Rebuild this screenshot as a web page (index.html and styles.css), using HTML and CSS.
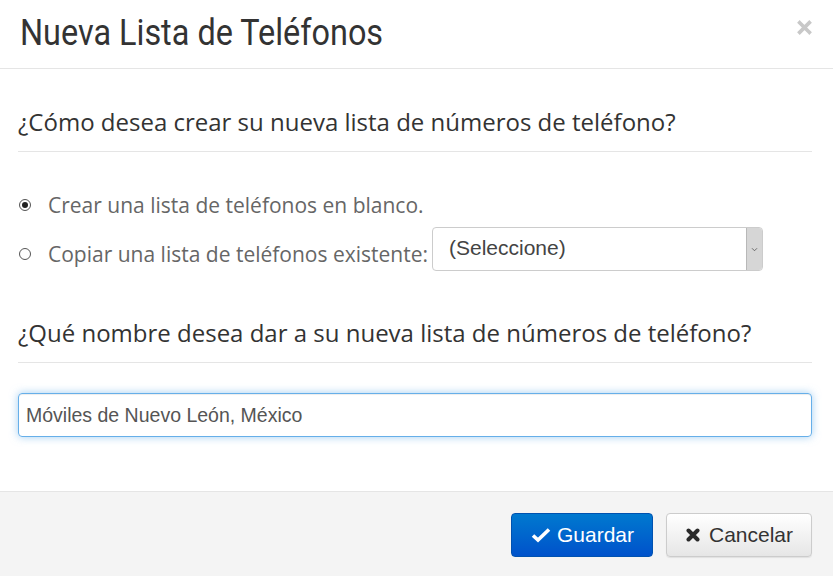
FILE: index.html
```html
<!DOCTYPE html>
<html>
  <head>
    <title>Nueva Lista de Teléfonos</title>
    <link rel="stylesheet" href="styles.css">
  </head>
  <body>
    <div class="modal">
      <header class="modal-header">
        <h1 class="modal-title">Nueva Lista de Teléfonos</h1>
        <button class="close-button" aria-label="Cerrar">
          <svg viewBox="0 0 14 14" width="15" height="15">
            <path d="M2.5 2.5 L11.5 11.5 M11.5 2.5 L2.5 11.5" stroke="#c8c8c8" stroke-width="3.4" stroke-linecap="square" />
          </svg>
        </button>
      </header>

      <div class="modal-body">
        <h2 class="section-title">¿Cómo desea crear su nueva lista de números de teléfono?</h2>

        <div class="options">
          <label class="radio-row">
            <span class="radio checked"></span>
            <span class="radio-label">Crear una lista de teléfonos en blanco.</span>
          </label>
          <label class="radio-row">
            <span class="radio"></span>
            <span class="radio-label">Copiar una lista de teléfonos existente:</span>
            <span class="select">
              <span class="select-text">(Seleccione)</span>
              <span class="select-arrow">
                <svg viewBox="0 0 8 6" width="7" height="5">
                  <path d="M1 1.5 L4 4.5 L7 1.5" fill="none" stroke="#555" stroke-width="1" />
                </svg>
              </span>
            </span>
          </label>
        </div>

        <h2 class="section-title">¿Qué nombre desea dar a su nueva lista de números de teléfono?</h2>

        <div class="text-input">Móviles de Nuevo León, México</div>
      </div>

      <footer class="modal-footer">
        <button class="btn btn-primary">
          <svg viewBox="0 0 20 16" width="20" height="16">
            <path d="M2 8.5 L7 13 L18 2.5" fill="none" stroke="#fff" stroke-width="3.6" />
          </svg>
          Guardar
        </button>
        <button class="btn btn-default">
          <svg viewBox="0 0 16 14" width="16" height="14">
            <path d="M3.5 2.5 L12.5 11.5 M12.5 2.5 L3.5 11.5" stroke="#2a2a2a" stroke-width="4" stroke-linecap="round" />
          </svg>
          Cancelar
        </button>
      </footer>
    </div>
  </body>
</html>
```

FILE: styles.css
```css
* {
  margin: 0;
  padding: 0;
  box-sizing: border-box;
}

body {
  width: 833px;
  height: 576px;
  background: #ffffff;
  overflow: hidden;
}

.modal {
  display: flex;
  flex-direction: column;
  height: 576px;
}

.modal-header {
  display: flex;
  align-items: center;
  justify-content: space-between;
  height: 69px;
  padding: 0 21px 0 20px;
  border-bottom: 1px solid #e5e5e5;
}

.modal-title {
  font-family: Roboto, sans-serif;
  font-weight: 400;
  font-size: 36px;
  color: #333333;
  transform: scaleX(0.9);
  transform-origin: left center;
  white-space: nowrap;
  margin-top: -2px;
}

.close-button {
  background: transparent;
  border: none;
  display: flex;
  margin-top: -14px;
}

.modal-body {
  flex: 1;
  padding: 0 21px 0 18px;
}

.section-title {
  font-family: "Open Sans", sans-serif;
  font-weight: 400;
  font-size: 24px;
  color: #333333;
  line-height: 32px;
  padding-bottom: 13px;
  border-bottom: 1px solid #e5e5e5;
  margin-top: 37px;
}

.options {
  display: flex;
  flex-direction: column;
  gap: 7px;
  margin: 38px 0 46px;
}

.radio-row {
  display: flex;
  align-items: center;
  min-height: 30px;
}

.radio {
  width: 12px;
  height: 12px;
  border: 1px solid #555555;
  border-radius: 50%;
  margin: 0 17px 0 1px;
  position: relative;
}

.radio.checked::after {
  content: "";
  position: absolute;
  left: 2px;
  top: 2px;
  width: 6px;
  height: 6px;
  border-radius: 50%;
  background: #222222;
}

.radio-label {
  font-family: "Open Sans", sans-serif;
  font-size: 21px;
  color: #666666;
}

.radio-row:last-child .radio,
.radio-row:last-child .radio-label {
  margin-top: 9px;
}

.select {
  display: flex;
  align-items: center;
  width: 331px;
  height: 44px;
  margin-left: 4px;
  border: 1px solid #cccccc;
  border-radius: 4px;
  overflow: hidden;
}

.select-text {
  flex: 1;
  font-family: "Liberation Sans", Arial, sans-serif;
  font-size: 21px;
  color: #444444;
  padding-left: 16px;
  margin-top: -3px;
}

.select-arrow {
  display: flex;
  align-items: center;
  justify-content: center;
  width: 16px;
  height: 100%;
  background: #d6d6d6;
  border-left: 1px solid #b8b8b8;
}

.text-input {
  margin-top: 30px;
  height: 44px;
  display: flex;
  align-items: center;
  padding-left: 7px;
  border: 1px solid #66afe9;
  border-radius: 4px;
  box-shadow: inset 0 1px 1px rgba(0, 0, 0, 0.075), 0 0 8px rgba(102, 175, 233, 0.6);
  font-family: "Liberation Sans", Arial, sans-serif;
  font-size: 19.5px;
  color: #555555;
}

.modal-footer {
  display: flex;
  justify-content: flex-end;
  align-items: flex-start;
  gap: 13px;
  height: 85px;
  padding: 21px 21px 0 0;
  background: #f4f4f4;
  border-top: 1px solid #e5e5e5;
}

.btn {
  display: flex;
  align-items: center;
  gap: 6px;
  height: 44px;
  border-radius: 4px;
  font-family: "Liberation Sans", Arial, sans-serif;
  font-size: 21px;
  cursor: pointer;
}

.btn-primary {
  width: 142px;
  padding-left: 19px;
  color: #ffffff;
  background: linear-gradient(#0079cf, #0052cb);
  border: 1px solid #0052b0;
}

.btn-default {
  width: 146px;
  padding-left: 18px;
  gap: 8px;
  color: #333333;
  background: linear-gradient(#ffffff, #e6e6e6);
  border: 1px solid #cccccc;
  box-shadow: 0 1px 1px rgba(0, 0, 0, 0.08);
}
```
